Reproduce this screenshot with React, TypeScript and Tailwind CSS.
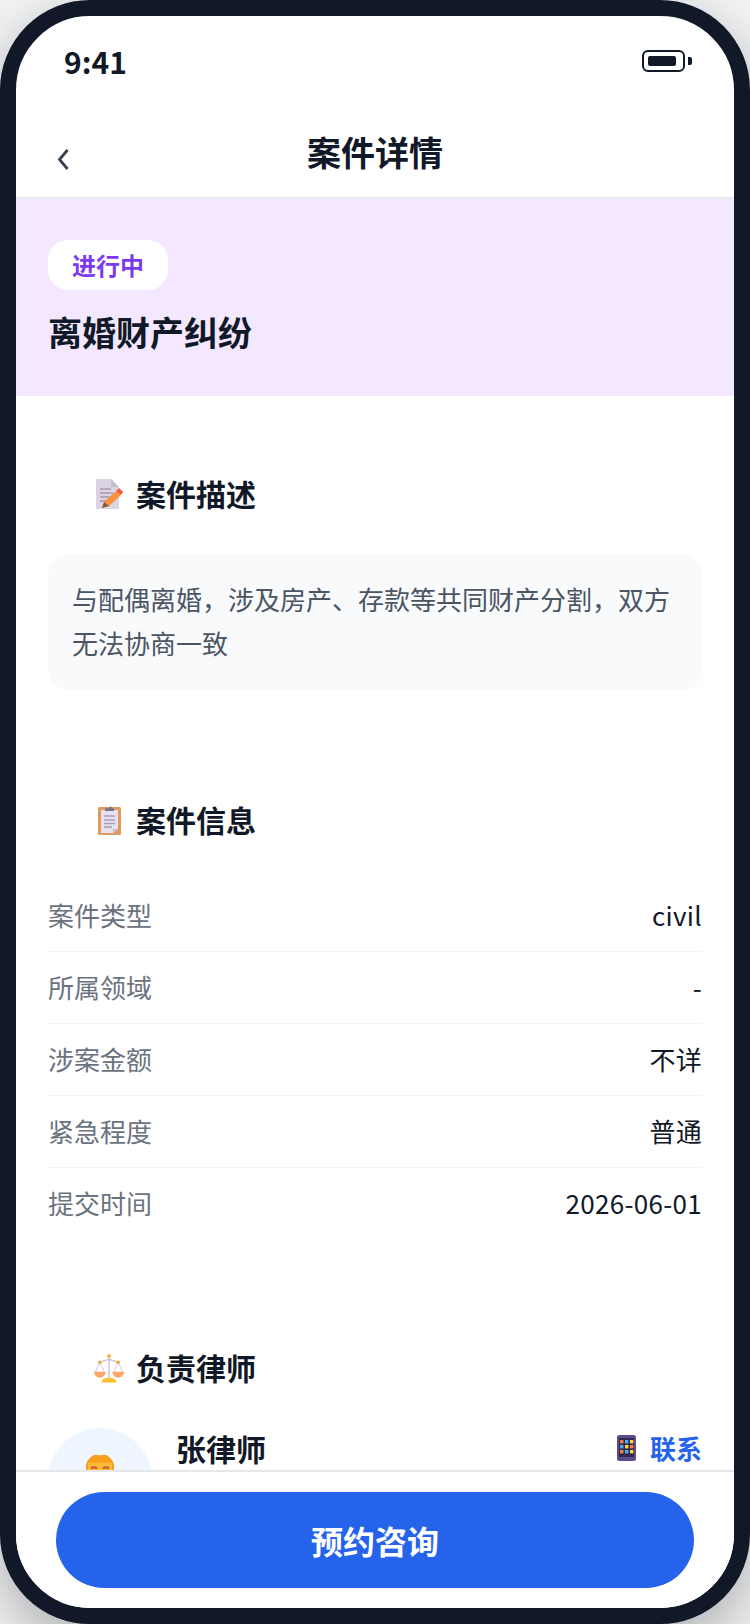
const FONT = '"Noto Sans CJK SC", "Noto Sans", sans-serif';

function MemoIcon() {
  return (
    <svg width="27" height="30" viewBox="0 0 27 30" className="block">
      <path d="M0 0h15l8 8v22H0z" fill="#dcd3e3" />
      <path d="M15 0l8 8h-8z" fill="#c6bdd0" />
      <path d="M4 10h11M4 14h13M4 18h11M4 22h7" stroke="#a49aae" strokeWidth="1.6" />
      <path d="M6 29l2-6L20 12l5 4-12 11z" fill="#fb923c" />
      <path d="M20 12l3-3 4 4-2 3z" fill="#f4573c" />
      <path d="M6 29l2-6 5 4z" fill="#7c5a48" />
    </svg>
  );
}

function ClipboardIcon() {
  return (
    <svg width="23" height="30" viewBox="0 0 23 30" className="block">
      <rect x="0" y="2" width="23" height="28" rx="1.5" fill="#e0995f" />
      <path d="M3 5h17v19l-5 4H3z" fill="#e8e0ee" />
      <path d="M15 28l5-4h-5z" fill="#c8bed2" />
      <path d="M6 11h11M6 15h11M6 18.500h11M6 22h8" stroke="#a79db3" strokeWidth="1.4" />
      <path d="M7 5a2 2 0 0 1 2-2h2a1.500 1.500 0 0 1 3 0a2 2 0 0 1 2 3H7z" fill="#7e7385" />
    </svg>
  );
}

function ScalesIcon() {
  return (
    <svg width="30" height="30" viewBox="0 0 31 30" className="block">
      <path d="M15.500 3v22M6 9l9.500-3L25 9" stroke="#d3c7da" strokeWidth="1.600" fill="none" />
      <path d="M6 9L1.500 19M6 9l4.500 10M25 9l-4.500 10M25 9l4.500 10" stroke="#d3c7da" strokeWidth="1" fill="none" />
      <circle cx="15.500" cy="2.500" r="2" fill="#f9b233" />
      <circle cx="6" cy="9" r="1.800" fill="#f9a13a" />
      <circle cx="25" cy="9" r="1.800" fill="#f9a13a" />
      <path d="M0 19h12a6 6 0 0 1-12 0zM19 19h12a6 6 0 0 1-12 0z" fill="#fda56a" />
      <path d="M8 30c0-4 3.500-5 7.500-5s7.500 1 7.500 5z" fill="#fcc22d" />
    </svg>
  );
}

function PhoneIcon() {
  return (
    <svg width="19" height="26" viewBox="0 0 19 26" className="block">
      <rect width="19" height="26" rx="2.500" fill="#5b4a8c" />
      <rect x="2" y="3" width="15" height="19" fill="#33284f" />
      <rect x="3" y="5" width="3.400" height="3.400" fill="#f9803c" />
      <rect x="8" y="5" width="3.400" height="3.400" fill="#3bb4ef" />
      <rect x="13" y="5" width="3.400" height="3.400" fill="#fcd53f" />
      <rect x="3" y="10" width="3.400" height="3.400" fill="#3bb4ef" />
      <rect x="8" y="10" width="3.400" height="3.400" fill="#fcd53f" />
      <rect x="13" y="10" width="3.400" height="3.400" fill="#f9803c" />
      <rect x="3" y="15" width="3.400" height="3.400" fill="#f9803c" />
      <rect x="8" y="15" width="3.400" height="3.400" fill="#3bb4ef" />
      <rect x="13" y="15" width="3.400" height="3.400" fill="#fcd53f" />
    </svg>
  );
}

function FaceIcon() {
  return (
    <svg width="28" height="52" viewBox="0 0 28 52" className="block">
      <path d="M0 10Q2 5 6 2Q10 0 14 1.500Q19 0 22 2Q26 5 28 10V30H0z" fill="#f7a01e" />
      <path d="M2 8.500H26V30H2z" fill="#fbb934" />
      <path d="M5 14.500Q8 12 11 14.500M17 14.500Q20 12 23 14.500" stroke="#c9603c" strokeWidth="2.400" fill="none" />
    </svg>
  );
}

function SectionTitle({ icon, title }: { icon: React.ReactNode; title: string }) {
  return (
    <div className="flex items-center h-[44px]">
      <div className="ml-[78px] w-[30px] flex justify-center">{icon}</div>
      <span className="ml-[12px] pb-[2px] text-[30px] leading-[42px] font-semibold text-[#111827]">{title}</span>
    </div>
  );
}

const rows = [
  ['案件类型', 'civil'],
  ['所属领域', '-'],
  ['涉案金额', '不详'],
  ['紧急程度', '普通'],
  ['提交时间', '2026-06-01'],
];

export default function App() {
  return (
    <div className="w-[750px] h-[1624px] bg-[#f3f4f6]" style={{ fontFamily: FONT }}>
      <div className="w-full h-full rounded-[90px] border-[16px] border-[#111827] bg-white overflow-hidden flex flex-col shadow-[0_20px_60px_rgba(0,0,0,0.3)]">
        <div className="h-[88px] shrink-0 flex items-center justify-between pl-[48px] pr-[42px] pt-[2px]">
          <span className="text-[30px] font-semibold text-[#111827]">9:41</span>
          <div className="flex items-center gap-[3px]">
            <div className="w-[43px] h-[22px] rounded-[6px] border-2 border-[#111827] py-[4px] px-[4px]">
              <div className="h-full w-[28px] rounded-[2px] bg-[#111827]" />
            </div>
            <div className="w-[4px] h-[8px] rounded-r-[2px] bg-[#111827]" />
          </div>
        </div>
        <div className="h-[95px] shrink-0 relative flex items-center justify-center pt-[2px] border-b-2 border-[#e9ebee]">
          <svg width="14" height="24" viewBox="0 0 14 24" className="absolute left-[40px] top-[44px]" fill="none">
            <path d="M11.500 2L3.500 11.500L11.500 21" stroke="#374151" strokeWidth="2.800" />
          </svg>
          <span className="text-[34px] font-semibold text-[#111827]">案件详情</span>
        </div>
        <div className="flex-1 min-h-0 overflow-hidden">
          <div className="bg-[#f3e8ff] h-[197px] px-[32px] pt-[41px]">
            <div className="inline-flex items-center h-[50px] px-[24px] rounded-[20px] bg-white text-[24px] font-semibold text-[#7c3aed]">
              进行中
            </div>
            <div className="mt-[17px] text-[34px] leading-[50px] font-semibold text-[#111827]">离婚财产纠纷</div>
          </div>
          <div className="pt-[76px] px-[32px]">
            <div className="-mx-[32px]">
              <SectionTitle icon={<MemoIcon />} title="案件描述" />
            </div>
            <div className="mt-[38px] rounded-[20px] bg-[#f9fafb] pt-[23px] pb-[25px] px-[24px] text-[26px] leading-[44px] text-[#4b5563]">
              与配偶离婚，涉及房产、存款等共同财产分割，双方无法协商一致
            </div>
          </div>
          <div className="pt-[108px] px-[32px]">
            <div className="-mx-[32px]">
              <SectionTitle icon={<ClipboardIcon />} title="案件信息" />
            </div>
            <div className="mt-[38px]">
              {rows.map(([k, v], i) => (
                <div
                  key={k}
                  className={`flex items-center justify-between h-[72px] pb-[2px] border-b ${i < rows.length - 1 ? 'border-[#f3f4f6]' : 'border-transparent'}`}
                >
                  <span className="text-[26px] text-[#6b7280]">{k}</span>
                  <span className="text-[26px] tracking-[0.3px] text-[#111827]">{v}</span>
                </div>
              ))}
            </div>
          </div>
          <div className="pt-[106px] px-[32px]">
            <div className="-mx-[32px]">
              <SectionTitle icon={<ScalesIcon />} title="负责律师" />
            </div>
            <div className="mt-[38px] flex items-start justify-between">
              <div className="flex items-start">
                <div className="w-[104px] h-[104px] rounded-full bg-[#eff6ff] flex items-center justify-center shrink-0">
                  <FaceIcon />
                </div>
                <span className="ml-[24px] text-[30px] leading-[40px] font-semibold text-[#111827]">张律师</span>
              </div>
              <div className="flex items-center gap-[14px] pt-[7px]">
                <PhoneIcon />
                <span className="text-[26px] leading-[26px] font-semibold text-[#2563eb]">联系</span>
              </div>
            </div>
          </div>
        </div>
        <div className="h-[138px] shrink-0 border-t-2 border-[#e5e7eb] bg-white px-[40px] pt-[20px]">
          <div className="h-[96px] rounded-[48px] bg-[#2563eb] flex items-center justify-center text-[32px] font-semibold text-white">
            预约咨询
          </div>
        </div>
      </div>
    </div>
  );
}
